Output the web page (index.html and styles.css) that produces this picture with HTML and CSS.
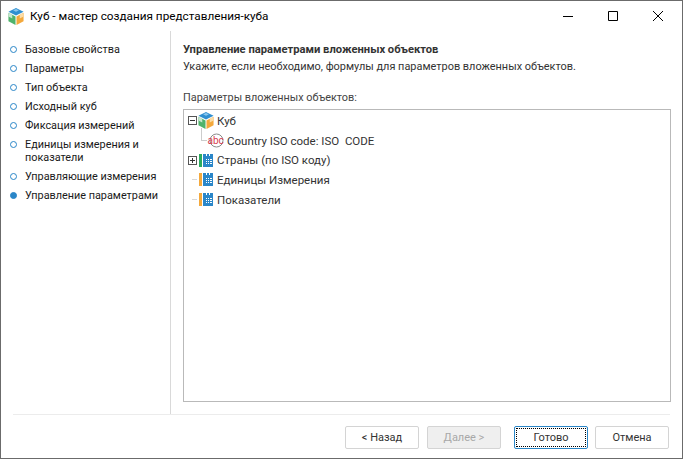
FILE: index.html
```html
<!DOCTYPE html>
<html>
<head>
    <title>Куб - мастер создания представления-куба</title>
    <link rel="stylesheet" href="styles.css">
</head>
<body>
    <svg class="defs" width="0" height="0">
        <symbol id="cube" viewBox="2 1 16 18">
            <path d="M10 1l8 4-8 4-8-4z" fill="#2f8fd0"/>
            <path d="M7 3.5l3-1.5 3 1.5-3 1.5z" fill="#8cc8ee"/>
            <path d="M2 6l7.5 4v9L2 15z" fill="#4fb36b"/>
            <path d="M18 6l-7.5 4v9l7.5-4z" fill="#f4a93c"/>
            <path d="M2 6l4 2v4l-4-2z" fill="#c7e6cf"/>
            <path d="M18 6l-4 2v4l4-2z" fill="#fbdca6"/>
        </symbol>
        <symbol id="dim" viewBox="0 0 10 13">
            <path d="M0 0h3v2h1V0h2v2h1V0h3v13H0z" fill="#2a86c8"/>
            <path d="M3 5h1v1H3zM5 5h1v1H5zM7 5h2v1H7zM3 7h1v1H3zM5 7h1v1H5zM7 7h2v1H7zM3 9h1v1H3zM5 9h1v1H5zM7 9h2v1H7z" fill="#fff"/>
        </symbol>
    </svg>

    <div class="window">
        <div class="titlebar">
            <svg class="title-icon"><use href="#cube"/></svg>
            <span class="title-text">Куб - мастер создания представления-куба</span>
            <div class="win-buttons">
                <svg class="win-btn" viewBox="0 0 10 10"><path d="M0 5.5h10" stroke="#000"/></svg>
                <svg class="win-btn" viewBox="0 0 10 10"><path d="M.5.5h9v9h-9z" fill="none" stroke="#000"/></svg>
                <svg class="win-btn" viewBox="0 0 10 10"><path d="M0 0l10 10M10 0L0 10" stroke="#000" stroke-width="1"/></svg>
            </div>
        </div>

        <div class="main">
            <ul class="steps">
                <li>Базовые свойства</li>
                <li>Параметры</li>
                <li>Тип объекта</li>
                <li>Исходный куб</li>
                <li>Фиксация измерений</li>
                <li>Единицы измерения и показатели</li>
                <li>Управляющие измерения</li>
                <li class="current">Управление параметрами</li>
            </ul>

            <div class="content">
                <h2>Управление параметрами вложенных объектов</h2>
                <p class="hint">Укажите, если необходимо, формулы для параметров вложенных объектов.</p>
                <div class="tree-label">Параметры вложенных объектов:</div>
                <div class="tree">
                    <div class="node">
                        <span class="toggle minus"></span>
                        <svg class="icon-cube"><use href="#cube"/></svg>
                        <span>Куб</span>
                    </div>
                    <div class="node child">
                        <span class="elbow"></span>
                        <svg class="icon-abc" viewBox="0 0 17 15">
                            <circle cx="9.500" cy="7.500" r="6.500" fill="#fff" stroke="#8a8a8a"/>
                            <text x="0.500" y="11" class="abc-text">abc</text>
                        </svg>
                        <span>Country ISO code: ISO&nbsp;&nbsp;CODE</span>
                    </div>
                    <div class="node">
                        <span class="toggle plus"></span>
                        <span class="bar green"></span>
                        <svg class="icon-dim"><use href="#dim"/></svg>
                        <span>Страны (по ISO коду)</span>
                    </div>
                    <div class="node">
                        <span class="dash"></span>
                        <span class="bar orange"></span>
                        <svg class="icon-dim"><use href="#dim"/></svg>
                        <span>Единицы Измерения</span>
                    </div>
                    <div class="node">
                        <span class="dash"></span>
                        <span class="bar orange"></span>
                        <svg class="icon-dim"><use href="#dim"/></svg>
                        <span>Показатели</span>
                    </div>
                </div>
            </div>
        </div>

        <div class="footer">
            <button class="btn">&lt; Назад</button>
            <button class="btn" disabled>Далее &gt;</button>
            <button class="btn default"><span>Готово</span></button>
            <button class="btn">Отмена</button>
        </div>
    </div>
</body>
</html>
```

FILE: styles.css
```css
html, body {
    margin: 0;
    padding: 0;
    height: 100%;
}

body {
    font-family: 'Roboto', sans-serif;
    font-size: 10.85px;
    color: #1a1a1a;
    background: #fff;
}

.defs {
    display: block;
    height: 0;
}

.window {
    box-sizing: border-box;
    height: 459px;
    border: 1px solid #6b6b6b;
    display: flex;
    flex-direction: column;
}

.titlebar {
    height: 30px;
    display: flex;
    align-items: center;
    padding-left: 7px;
}

.title-icon {
    width: 16px;
    height: 17px;
    margin-right: 6px;
}

.title-text {
    font-size: 11.75px;
    color: #000;
}

.win-buttons {
    margin-left: auto;
    display: flex;
    align-items: center;
    gap: 35px;
    padding-right: 19px;
}

.win-btn {
    width: 10px;
    height: 10px;
    display: block;
}

.main {
    flex: 1;
    display: flex;
    min-height: 0;
}

.steps {
    box-sizing: border-box;
    width: 170px;
    margin: 0;
    padding: 9px 6px 0 24px;
    list-style: none;
    border-right: 1px solid #d9d9d9;
}

.steps li {
    position: relative;
    line-height: 13px;
    padding: 3px 0;
}

.steps li::before {
    content: "";
    position: absolute;
    left: -15px;
    top: 6px;
    width: 7px;
    height: 7px;
    box-sizing: border-box;
    border: 1px solid #2a86c8;
    border-radius: 50%;
}

.steps li.current::before {
    background: #2a86c8;
}

.content {
    flex: 1;
    min-width: 0;
    padding: 10px 11px 12px 12px;
    display: flex;
    flex-direction: column;
}

h2 {
    margin: 0;
    font-size: 11.2px;
    line-height: 17px;
    font-weight: bold;
    color: #333;
}

.hint {
    margin: 0;
    font-size: 10.93px;
    line-height: 18px;
    color: #333;
}

.tree-label {
    margin-top: 13px;
    line-height: 18px;
    color: #444;
}

.tree {
    flex: 1;
    margin-top: 2px;
    border: 1px solid #b9b9b9;
    padding: 1px 0 0 4px;
    font-size: 11.5px;
}

.node {
    height: 19.7px;
    display: flex;
    align-items: center;
    color: #333;
}

.toggle {
    position: relative;
    box-sizing: border-box;
    width: 9px;
    height: 9px;
    border: 1px solid #555;
    flex: none;
}

.toggle::before {
    content: "";
    position: absolute;
    left: 1px;
    top: 3px;
    width: 5px;
    height: 1px;
    background: #333;
}

.toggle.plus::after {
    content: "";
    position: absolute;
    left: 3px;
    top: 1px;
    width: 1px;
    height: 5px;
    background: #333;
}

.icon-cube {
    width: 16px;
    height: 17px;
    margin: 0 3px 0 1px;
}

.child {
    padding-left: 13px;
}

.elbow {
    width: 6px;
    height: 13px;
    margin-top: -13px;
    box-sizing: border-box;
    border-left: 1px solid #ccc;
    border-bottom: 1px solid #ccc;
}

.icon-abc {
    width: 17px;
    height: 15px;
    margin-right: 3px;
}

.abc-text {
    font-family: 'Roboto', sans-serif;
    font-size: 10px;
    fill: #d6404e;
}

.dash {
    width: 5px;
    height: 1px;
    margin-left: 4px;
    background: #d8d8d8;
}

.bar {
    width: 3px;
    height: 13px;
    margin-left: 2px;
}

.green {
    background: #2bab5f;
}

.orange {
    background: #f4a93c;
}

.icon-dim {
    width: 10px;
    height: 13px;
    margin: 0 4px 0 1px;
}

.footer {
    height: 44px;
    box-sizing: border-box;
    margin: 0 12px;
    border-top: 1px solid #ececec;
    display: flex;
    justify-content: flex-end;
    align-items: flex-start;
    gap: 8px;
    padding: 11px 1px 0 0;
}

.btn {
    box-sizing: border-box;
    width: 74px;
    height: 23px;
    border: 1px solid #d4d4d4;
    border-radius: 2px;
    background: #fff;
    font-family: 'Roboto', sans-serif;
    font-size: 11px;
    color: #333;
    padding: 0;
}

.btn:disabled {
    background: #efefef;
    color: #a8a8a8;
}

.btn.default {
    margin-left: 5px;
    margin-right: -1px;
    border-color: #2a86c8;
    padding: 1px;
}

.btn.default span {
    display: block;
    height: 19px;
    line-height: 18px;
    box-sizing: border-box;
    border: 1px dotted #000;
}
```
